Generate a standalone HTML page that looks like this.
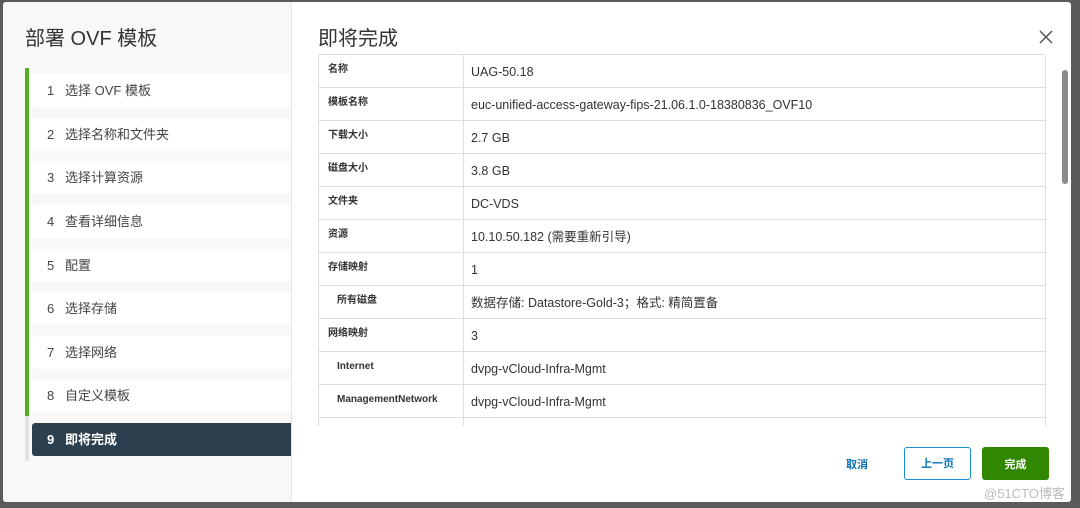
<!DOCTYPE html>
<html><head><meta charset="utf-8"><style>
*{margin:0;padding:0;box-sizing:border-box}
body{width:1080px;height:508px;background:#5b5b5b;font-family:"Liberation Sans","Noto Sans CJK SC",sans-serif;position:relative;overflow:hidden}
.modal{position:absolute;left:3px;top:2px;width:1068px;height:500px;background:#fff;border-radius:3px;overflow:hidden}
.left{position:absolute;left:0;top:0;width:289px;height:500px;background:#f8f8f8;border-right:1px solid #e4e4e4}
.left h1{position:absolute;left:22px;top:20px;font-size:20px;font-weight:normal;color:#333}
.bar{position:absolute;left:22px;top:66px;width:4px;height:348px;background:#5aad1f}
.bar2{position:absolute;left:22px;top:414px;width:4px;height:45px;background:#e0e0e0}
.step{position:absolute;left:29px;width:259px;height:33px;background:#fff;border-radius:3px 0 0 3px;font-size:13px;color:#444;line-height:33px;padding-left:15px}
.step span{display:inline-block;width:18px}
.step.act{background:#2b3f4e;color:#fff;font-weight:bold}
.right h2{position:absolute;left:315px;top:20px;font-size:20px;font-weight:normal;color:#333}
.close{position:absolute;left:1036px;top:28px}
.tbl{position:absolute;left:315px;top:52px;width:728px;height:372px;border:1px solid #ddd;border-bottom:none;border-radius:3px 3px 0 0;overflow:hidden}
.row{height:33px;border-bottom:1px solid #ddd;display:flex}
.row .k{width:145px;border-right:1px solid #ddd;font-size:10px;font-weight:bold;color:#333;padding-left:9px;line-height:30px}
.row .k.in{padding-left:18px}
.row .v{font-size:12.5px;color:#333;padding-left:7px;line-height:34px}
.scroll{position:absolute;left:1059px;top:68px;width:6px;height:114px;background:#8a8a8a;border-radius:3px}
.btn{position:absolute;top:445px;height:33px;font-size:11px;font-weight:bold;text-align:center;line-height:33px;border-radius:3px}
</style></head><body>
<div class="modal">
<div class="left">
<h1>部署 OVF 模板</h1>
<div class="bar"></div><div class="bar2"></div>
<div class="step" style="top:72px"><span>1</span>选择 OVF 模板</div>
<div class="step" style="top:116px"><span>2</span>选择名称和文件夹</div>
<div class="step" style="top:159px"><span>3</span>选择计算资源</div>
<div class="step" style="top:203px"><span>4</span>查看详细信息</div>
<div class="step" style="top:247px"><span>5</span>配置</div>
<div class="step" style="top:290px"><span>6</span>选择存储</div>
<div class="step" style="top:334px"><span>7</span>选择网络</div>
<div class="step" style="top:377px"><span>8</span>自定义模板</div>
<div class="step act" style="top:421px"><span>9</span>即将完成</div>
</div>
<div class="right">
<h2>即将完成</h2>
<svg class="close" width="14" height="14" viewBox="0 0 14 14"><path d="M1 1L13 13M13 1L1 13" stroke="#555" stroke-width="1.5"/></svg>
<div class="tbl">
<div class="row"><div class="k">名称</div><div class="v">UAG-50.18</div></div>
<div class="row"><div class="k">模板名称</div><div class="v">euc-unified-access-gateway-fips-21.06.1.0-18380836_OVF10</div></div>
<div class="row"><div class="k">下载大小</div><div class="v">2.7 GB</div></div>
<div class="row"><div class="k">磁盘大小</div><div class="v">3.8 GB</div></div>
<div class="row"><div class="k">文件夹</div><div class="v">DC-VDS</div></div>
<div class="row"><div class="k">资源</div><div class="v">10.10.50.182 (需要重新引导)</div></div>
<div class="row"><div class="k">存储映射</div><div class="v">1</div></div>
<div class="row"><div class="k in">所有磁盘</div><div class="v">数据存储: Datastore-Gold-3；格式: 精简置备</div></div>
<div class="row"><div class="k">网络映射</div><div class="v">3</div></div>
<div class="row"><div class="k in">Internet</div><div class="v">dvpg-vCloud-Infra-Mgmt</div></div>
<div class="row"><div class="k in">ManagementNetwork</div><div class="v">dvpg-vCloud-Infra-Mgmt</div></div>
<div class="row"><div class="k"></div><div class="v"></div></div>
</div>
<div class="scroll"></div>
<div class="btn" style="left:832px;width:44px;color:#0b72b5;line-height:36px">取消</div>
<div class="btn" style="left:901px;width:67px;border:1px solid #1a8fd1;color:#0b72b5;line-height:32px">上一页</div>
<div class="btn" style="left:979px;width:67px;background:#318700;color:#fff;line-height:36px">完成</div>
</div>
</div>
<div style="position:absolute;left:984px;top:483px;font-size:13px;color:#bbb">@51CTO博客</div>
</body></html>
